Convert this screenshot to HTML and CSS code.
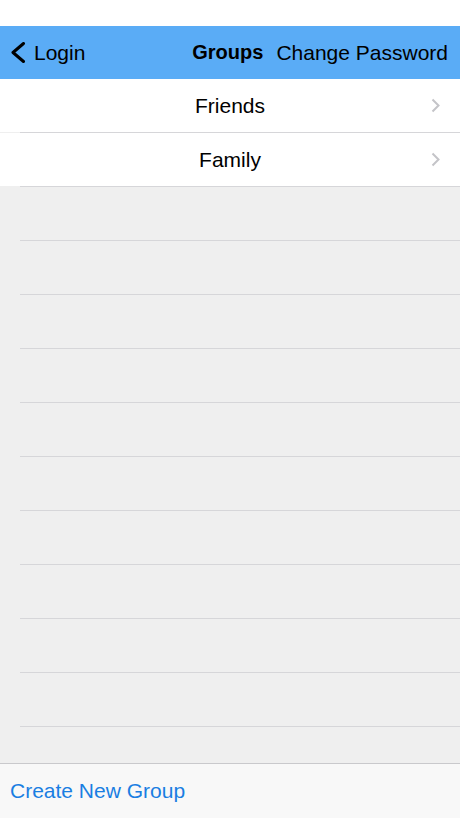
FILE: index.html
```html
<!DOCTYPE html>
<html lang="en">
<head>
    <meta charset="UTF-8">
    <meta name="viewport" content="width=device-width, initial-scale=1.0">
    <title>Groups</title>
    <link rel="stylesheet" href="styles.css">
</head>
<body>
    <div class="screen">
        <div class="status-bar"></div>

        <div class="nav-bar">
            <a class="back" href="#">
                <svg class="back-icon" width="16" height="21" viewBox="0 0 16 21">
                    <path d="M13.5 1.5 L3 10.5 L13.5 19.5" fill="none" stroke="#000" stroke-width="3" stroke-linecap="round" stroke-linejoin="round"/>
                </svg>
                <span>Login</span>
            </a>
            <div class="nav-title">Groups</div>
            <a class="nav-action" href="#">Change Password</a>
        </div>

        <ul class="list">
            <li class="row filled">
                <span class="row-label">Friends</span>
                <svg class="chevron" width="9" height="15" viewBox="0 0 9 15">
                    <path d="M1.5 1.5 L7.5 7.5 L1.5 13.5" fill="none" stroke="#c4c4c8" stroke-width="2"/>
                </svg>
            </li>
            <li class="row filled">
                <span class="row-label">Family</span>
                <svg class="chevron" width="9" height="15" viewBox="0 0 9 15">
                    <path d="M1.5 1.5 L7.5 7.5 L1.5 13.5" fill="none" stroke="#c4c4c8" stroke-width="2"/>
                </svg>
            </li>
            <li class="row"></li>
            <li class="row"></li>
            <li class="row"></li>
            <li class="row"></li>
            <li class="row"></li>
            <li class="row"></li>
            <li class="row"></li>
            <li class="row"></li>
            <li class="row"></li>
            <li class="row"></li>
        </ul>

        <div class="toolbar">
            <a class="toolbar-link" href="#">Create New Group</a>
        </div>
    </div>
</body>
</html>
```

FILE: styles.css
```css
body {
    margin: 0;
    font-family: "Liberation Sans", Arial, sans-serif;
    background-color: #efefef;
}

.screen {
    width: 460px;
    height: 818px;
    display: flex;
    flex-direction: column;
    overflow: hidden;
}

.status-bar {
    height: 26px;
    background-color: #fff;
}

.nav-bar {
    height: 53px;
    background-color: #5aacf6;
    display: flex;
    align-items: center;
    padding: 0 12px 0 10px;
    font-size: 21px;
    color: #000;
}

.nav-bar a {
    color: #000;
    text-decoration: none;
}

.back {
    display: flex;
    align-items: center;
    gap: 8px;
    margin-right: auto;
}

.back-icon {
    display: block;
}

.nav-title {
    font-size: 20px;
    font-weight: bold;
    margin-right: 13px;
}

.list {
    list-style: none;
    margin: 0;
    padding: 0;
    flex: 1;
    overflow: hidden;
}

.row {
    height: 53px;
    display: flex;
    align-items: center;
    justify-content: center;
    position: relative;
    font-size: 21px;
    color: #000;
}

.row::after {
    content: "";
    position: absolute;
    left: 20px;
    right: 0;
    bottom: -1px;
    height: 1px;
    background-color: #d6d6d9;
}

.row + .row {
    margin-top: 1px;
}

.row.filled {
    background-color: #fff;
}

.chevron {
    position: absolute;
    right: 20px;
    top: 19px;
}

.toolbar {
    height: 54px;
    background-color: #f8f8f8;
    border-top: 1px solid #c9c9cc;
    display: flex;
    align-items: center;
    padding: 0 10px;
}

.toolbar-link {
    color: #1a7ee2;
    font-size: 21px;
    text-decoration: none;
}
```
